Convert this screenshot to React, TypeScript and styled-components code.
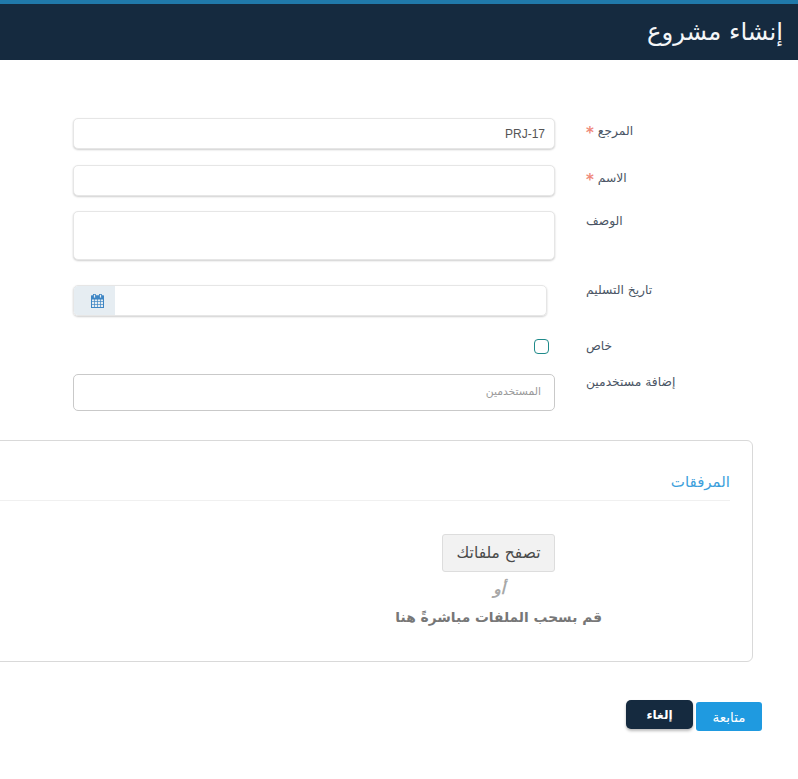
import React from "react";
import styled, { createGlobalStyle } from "styled-components";

const Global = createGlobalStyle`
  html, body { margin: 0; padding: 0; background: #fff; overflow: hidden; }
  body { font-family: "DejaVu Sans", "Noto Sans", sans-serif; }
`;

const Page = styled.div`
  width: 798px;
  height: 779px;
  overflow: hidden;
  direction: rtl;
  display: flex;
  flex-direction: column;
`;

const Header = styled.header`
  height: 56px;
  flex: none;
  border-top: 4px solid #2079aa;
  background: #152a3f;
  color: #f4f6f8;
  display: flex;
  align-items: center;
  padding-right: 15px;
`;

const Title = styled.h1`
  margin: 0;
  font-size: 24.3px;
  font-weight: 400;
  line-height: 1;
`;

const Form = styled.div`
  display: flex;
  flex-direction: column;
  padding: 58px 0 0 73px;
  width: 798px;
  box-sizing: border-box;
`;

const Row = styled.div<{ $h: number; $mb: number }>`
  height: ${(p) => p.$h}px;
  margin-bottom: ${(p) => p.$mb}px;
  display: flex;
`;

const Label = styled.label<{ $shift?: number }>`
  flex: none;
  width: 212px;
  margin-left: 31px;
  margin-top: ${(p) => p.$shift ?? 3}px;
  text-align: left;
  font-size: 12.3px;
  line-height: 20px;
  color: #4a5564;
  box-sizing: border-box;
  white-space: nowrap;
`;

const Star = styled.span`
  color: #ef8a7c;
  font-size: 15px;
  font-weight: 700;
  margin-right: 4px;
  vertical-align: -3px;
  line-height: 1;
`;

const Field = styled.div`
  width: 482px;
  display: flex;
`;

const Input = styled.input`
  width: 100%;
  height: 100%;
  box-sizing: border-box;
  border: 1px solid #e6e6e6;
  border-radius: 5px;
  box-shadow: 0 1px 2px #cfcfcf;
  outline: none;
  padding: 0 9px;
  font-family: "Liberation Sans", sans-serif;
  font-size: 12px;
  color: #555;
  background: #fff;
`;

const TextArea = styled.textarea`
  width: 100%;
  height: 100%;
  box-sizing: border-box;
  border: 1px solid #e6e6e6;
  border-radius: 5px;
  box-shadow: 0 1px 2px #cfcfcf;
  outline: none;
  resize: none;
  background: #fff;
`;

const DateBox = styled.div`
  flex: 1;
  display: flex;
  border: 1px solid #e6e6e6;
  border-radius: 5px;
  box-shadow: 0 1px 2px #cfcfcf;
  overflow: hidden;
  margin-right: 8px;
`;

const DateInput = styled.div`
  flex: 1;
`;

const Addon = styled.div`
  width: 41px;
  box-sizing: border-box;
  padding-left: 6px;
  background: #e6edf2;
  display: flex;
  align-items: center;
  justify-content: center;
`;

const CheckWrap = styled.div`
  flex: 1;
  display: flex;
  align-items: center;
  justify-content: flex-start;
  padding-right: 6px;
`;

const Check = styled.span`
  display: block;
  width: 15px;
  height: 15px;
  box-sizing: border-box;
  border: 1.5px solid #1f8a8a;
  border-radius: 4px;
`;

const TagsBox = styled.div`
  width: 100%;
  height: 100%;
  box-sizing: border-box;
  border: 1px solid #c9c9c9;
  border-radius: 5px;
  padding: 0 13px 3px;
  display: flex;
  align-items: center;
  font-size: 10.8px;
  color: #9a9a9a;
`;

const Card = styled.section`
  margin: 29px 45px 0 -40px;
  height: 222px;
  box-sizing: border-box;
  border: 1px solid #d9d9d9;
  border-radius: 6px;
  padding: 28px 22px 0 0;
  flex: none;
`;

const CardTitle = styled.h2`
  margin: 0;
  height: 31px;
  line-height: 26px;
  font-size: 15px;
  font-weight: 400;
  color: #3d9fdc;
  border-bottom: 1px solid #f0f0f0;
`;

const Drop = styled.div`
  padding-right: 175px;
  padding-top: 33px;
  display: flex;
  flex-direction: column;
  align-items: flex-start;
`;

const Browse = styled.button`
  width: 113px;
  height: 38px;
  box-sizing: border-box;
  background: #f2f2f2;
  border: 1px solid #ddd;
  border-radius: 3px;
  font-family: inherit;
  font-size: 15.5px;
  color: #4a4a4a;
  padding: 0;
`;

const Or = styled.div`
  align-self: flex-start;
  margin: 5px 50px 0 0;
  font-size: 15px;
  line-height: 24px;
  font-weight: 700;
  font-style: italic;
  color: #a8a8a8;
`;

const Drag = styled.div`
  margin: 5px -47px 0 0;
  font-size: 13.8px;
  line-height: 22px;
  font-weight: 700;
  color: #777;
`;

const Actions = styled.div`
  display: flex;
  align-items: flex-start;
  gap: 3px;
  padding: 38px 36px 0 0;
`;

const Primary = styled.button`
  width: 66px;
  height: 29px;
  margin-top: 2px;
  border: 0;
  border-radius: 3px;
  background: #1f9ae0;
  color: #fff;
  font-family: inherit;
  font-size: 13.5px;
  padding: 0;
`;

const Secondary = styled.button`
  width: 67px;
  height: 29px;
  border: 0;
  border-radius: 5px;
  background: #152a3f;
  color: #fff;
  font-family: inherit;
  font-size: 12px;
  font-weight: 700;
  padding: 0;
  box-shadow: 0 2px 3px #bbb;
`;

const CalendarIcon = () => (
  <svg width="13" height="14" viewBox="0 0 13 14" fill="none" stroke="#3f86c4" strokeWidth="1">
    <rect x="0.5" y="2" width="12" height="11.5" />
    <path d="M0.5 7.5h12M0.5 10.5h12M3.5 5v8.5M6.5 5v8.5M9.5 5v8.5" strokeWidth="0.7" />
    <path d="M0.5 2h12v3h-12z" fill="#3f86c4" />
    <rect x="2.5" y="0.5" width="2" height="3.5" fill="#e6edf2" strokeWidth="0.8" />
    <rect x="8.5" y="0.5" width="2" height="3.5" fill="#e6edf2" strokeWidth="0.8" />
  </svg>
);

export default function App() {
  return (
    <Page>
      <Global />
      <Header>
        <Title>إنشاء مشروع</Title>
      </Header>
      <Form>
        <Row $h={31} $mb={16}>
          <Label>المرجع<Star>*</Star></Label>
          <Field><Input defaultValue="PRJ-17" /></Field>
        </Row>
        <Row $h={31} $mb={15}>
          <Label>الاسم<Star>*</Star></Label>
          <Field><Input /></Field>
        </Row>
        <Row $h={49} $mb={25}>
          <Label $shift={0}>الوصف</Label>
          <Field><TextArea /></Field>
        </Row>
        <Row $h={31} $mb={23}>
          <Label $shift={-5}>تاريخ التسليم</Label>
          <Field>
            <DateBox>
              <DateInput />
              <Addon><CalendarIcon /></Addon>
            </DateBox>
          </Field>
        </Row>
        <Row $h={15} $mb={20}>
          <Label $shift={-3}>خاص</Label>
          <Field><CheckWrap><Check /></CheckWrap></Field>
        </Row>
        <Row $h={37} $mb={0}>
          <Label $shift={-2}>إضافة مستخدمين</Label>
          <Field><TagsBox>المستخدمين</TagsBox></Field>
        </Row>
      </Form>
      <Card>
        <CardTitle>المرفقات</CardTitle>
        <Drop>
          <Browse>تصفح ملفاتك</Browse>
          <Or>أو</Or>
          <Drag>قم بسحب الملفات مباشرةً هنا</Drag>
        </Drop>
      </Card>
      <Actions>
        <Primary>متابعة</Primary>
        <Secondary>إلغاء</Secondary>
      </Actions>
    </Page>
  );
}
